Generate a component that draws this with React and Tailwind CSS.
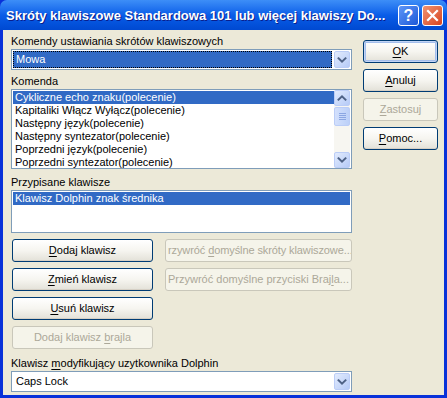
import React from "react";
import clsx from "clsx";

const FONT = "[font-family:'Liberation_Sans',Arial,sans-serif]";

function Chevron({ dir = "down" }) {
  const d = dir === "down" ? "M4 6 L8 10 L12 6" : "M4 10 L8 6 L12 10";
  return (
    <svg width="16" height="16" viewBox="0 0 16 16" fill="none">
      <path d={d} stroke="#4D6185" strokeWidth="2.2" strokeLinecap="square" />
    </svg>
  );
}

function ScrollBtn({ dir, className }) {
  return (
    <div
      className={clsx(
        "flex items-center justify-center w-[16px] h-[16px] rounded-[2px] border border-[#BBCDF7] bg-gradient-to-br from-[#E2EBFD] to-[#B6CBF7]",
        className
      )}
    >
      <Chevron dir={dir} />
    </div>
  );
}

function U({ children }) {
  return <span className="underline underline-offset-[2px]">{children}</span>;
}

function XpButton({ children, disabled, isDefault, className }) {
  return (
    <div
      className={clsx(
        "flex items-center justify-center h-[23px] rounded-[3px] border text-[11px] whitespace-nowrap overflow-hidden",
        disabled
          ? "border-[#C9C7BA] bg-[#F5F4EA] text-[#ACA899]"
          : "border-[#003C74] bg-gradient-to-b from-[#FFFFFF] via-[#F6F5F0] to-[#E3E1D8] text-black",
        isDefault && "shadow-[inset_0_0_0_1px_#C2D4F5,inset_0_0_0_2px_#A4BEEB]",
        !disabled && !isDefault && "shadow-[inset_0_-1px_0_#D6D0C5]",
        className
      )}
    >
      <span>{children}</span>
    </div>
  );
}

const COMMANDS = [
  "Cykliczne echo znaku(polecenie)",
  "Kapitaliki Włącz Wyłącz(polecenie)",
  "Następny język(polecenie)",
  "Następny syntezator(polecenie)",
  "Poprzedni język(polecenie)",
  "Poprzedni syntezator(polecenie)",
];

export default function App() {
  return (
    <div className={clsx("w-[447px] h-[398px] flex flex-col bg-[#0831D9] text-[11px] text-black", FONT)}>
      {/* title bar */}
      <div className="h-[30px] flex items-center pl-[6px] pr-[4px] bg-gradient-to-b from-[#3D8EF7] via-[#0A5DE8] to-[#0049D1] rounded-t-[7px]">
        <div className="flex-1 text-white font-bold text-[13px] whitespace-nowrap [text-shadow:1px_1px_0_#0A1E8C] pt-[1px]">
          Skróty klawiszowe Standardowa 101 lub więcej klawiszy Do...
        </div>
        <div className="flex gap-[3px] mt-[1px]">
          <div className="w-[21px] h-[21px] rounded-[3px] border border-white bg-gradient-to-br from-[#5E96F7] to-[#1C57D8] flex items-center justify-center text-white font-bold text-[16px] leading-none">
            ?
          </div>
          <div className="w-[21px] h-[21px] rounded-[3px] border border-white bg-gradient-to-br from-[#F09270] to-[#D6411C] flex items-center justify-center">
            <svg width="13" height="13" viewBox="0 0 13 13">
              <path d="M2 2 L11 11 M11 2 L2 11" stroke="white" strokeWidth="2.2" strokeLinecap="square" />
            </svg>
          </div>
        </div>
      </div>

      {/* body */}
      <div className="flex-1 mx-[3px] mb-[3px] bg-[#ECE9D8] flex">
        {/* left column */}
        <div className="w-[341px] ml-[8px] flex flex-col">
          <div className="mt-[5px] h-[13px] leading-[13px]">Komendy ustawiania skrótów klawiszowych</div>
          <div className="mt-[1px] h-[21px] border border-[#7F9DB9] bg-white flex items-center p-[1px]">
            <div className="flex-1 h-[17px] bg-[#E0A030]">
              <div className="h-full border border-dotted border-black bg-[#316AC5] text-white pl-[2px] leading-[15px]">
                Mowa
              </div>
            </div>
            <ScrollBtn dir="down" className="w-[16px] h-[17px] ml-[2px]" />
          </div>

          <div className="mt-[5px] h-[13px] leading-[13px]">Komenda</div>
          <div className="mt-[1px] h-[80px] border border-[#7F9DB9] bg-white flex">
            <div className="flex-1 flex flex-col pt-[1px] pl-[1px]">
              {COMMANDS.map((c, i) => (
                <div
                  key={c}
                  className={clsx(
                    "h-[13px] leading-[13px] pl-[2px] whitespace-nowrap",
                    i === 0 && "bg-[#316AC5] text-white"
                  )}
                >
                  {c}
                </div>
              ))}
            </div>
            <div className="w-[16px] flex flex-col bg-[#F7F6F1] mr-[1px]">
              <ScrollBtn dir="up" className="h-[16px]" />
              <div className="mt-[1px] h-[19px] rounded-[2px] border border-[#BBCDF7] bg-gradient-to-r from-[#D3E0FC] to-[#BCD0F8] flex flex-col items-center justify-center gap-[1px]">
                {[0, 1, 2, 3].map((k) => (
                  <div key={k} className="w-[7px] h-[1px] bg-[#8BA6E2]" />
                ))}
              </div>
              <div className="flex-1" />
              <ScrollBtn dir="down" className="h-[16px]" />
            </div>
          </div>

          <div className="mt-[7px] h-[13px] leading-[13px]">Przypisane klawisze</div>
          <div className="mt-[1px] h-[43px] border border-[#7F9DB9] bg-white pt-[1px] px-[1px]">
            <div className="h-[13px] leading-[13px] bg-[#316AC5] text-white pl-[2px]">Klawisz Dolphin znak średnika</div>
          </div>

          <div className="mt-[6px] flex gap-[12px]">
            <div className="w-[142px] ml-[1px] flex flex-col gap-[6px]">
              <XpButton>
                <U>D</U>odaj klawisz
              </XpButton>
              <XpButton>
                <U>Z</U>mień klawisz
              </XpButton>
              <XpButton>
                <U>U</U>suń klawisz
              </XpButton>
              <XpButton disabled>
                Dodaj klawisz <U>b</U>rajla
              </XpButton>
            </div>
            <div className="w-[187px] flex flex-col gap-[6px]">
              <XpButton disabled className="justify-start pl-[2px] text-[10.5px] tracking-[-0.1px]">
                rzywróć <U>d</U>omyślne skróty klawiszowe...
              </XpButton>
              <XpButton disabled>
                Przywróć domyślne przyciski Braj<U>l</U>a...
              </XpButton>
            </div>
          </div>

          <div className="mt-[8px] h-[13px] leading-[13px]">
            Klawisz <U>m</U>odyfikujący uzytkownika Dolphin
          </div>
          <div className="mt-[1px] h-[21px] border border-[#7F9DB9] bg-white flex items-center p-[1px]">
            <div className="flex-1 pl-[3px] leading-[15px]">Caps Lock</div>
            <ScrollBtn dir="down" className="w-[16px] h-[17px]" />
          </div>
        </div>

        {/* right column */}
        <div className="w-[75px] ml-[11px] mt-[10px] flex flex-col gap-[6px]">
          <XpButton isDefault>
            <U>O</U>K
          </XpButton>
          <XpButton>
            <U>A</U>nuluj
          </XpButton>
          <XpButton disabled>
            <U>Z</U>astosuj
          </XpButton>
          <XpButton>
            <U>P</U>omoc...
          </XpButton>
        </div>
      </div>
    </div>
  );
}
